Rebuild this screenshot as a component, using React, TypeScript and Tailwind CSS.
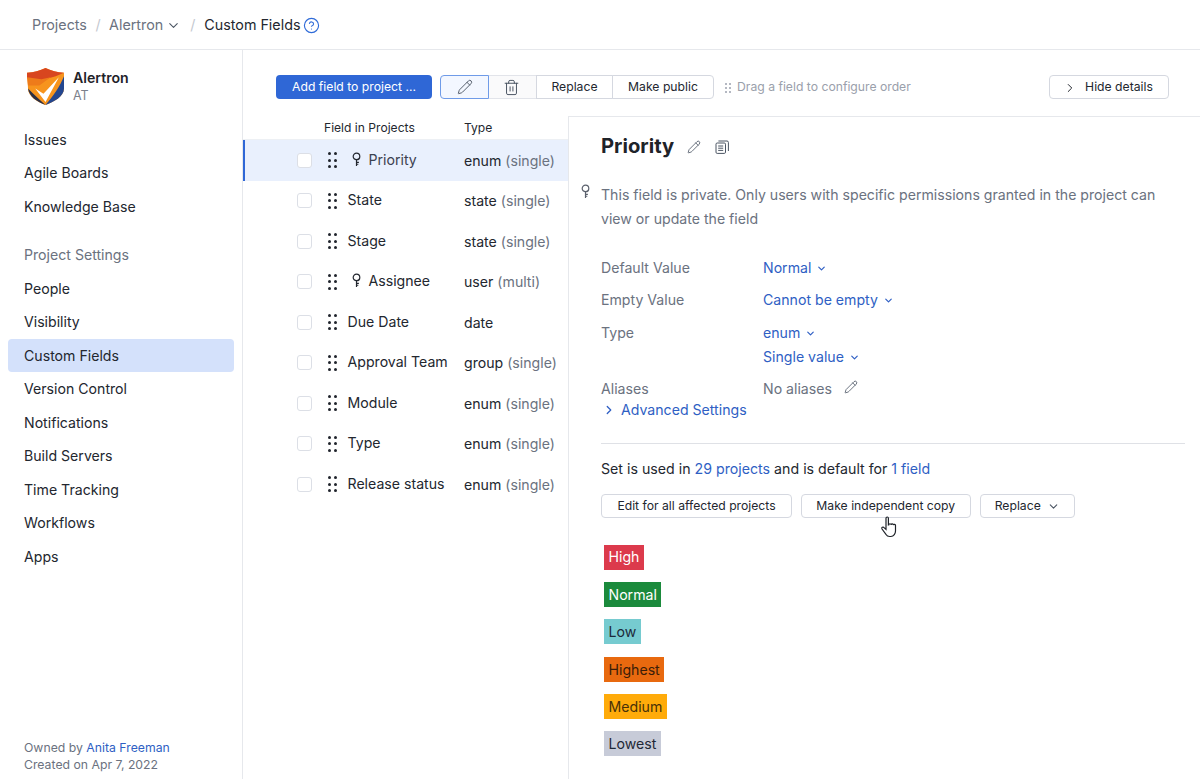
import { ChevronDown, ChevronRight, CircleHelp, Pencil, Trash2 } from "lucide-react";

const navTop = ["Issues", "Agile Boards", "Knowledge Base"];
const navSettings = ["People", "Visibility", "Custom Fields", "Version Control", "Notifications", "Build Servers", "Time Tracking", "Workflows", "Apps"];

const fields = [
  { name: "Priority", type: "enum", mode: "(single)", key: true, active: true },
  { name: "State", type: "state", mode: "(single)" },
  { name: "Stage", type: "state", mode: "(single)" },
  { name: "Assignee", type: "user", mode: "(multi)", key: true },
  { name: "Due Date", type: "date", mode: "" },
  { name: "Approval Team", type: "group", mode: "(single)" },
  { name: "Module", type: "enum", mode: "(single)" },
  { name: "Type", type: "enum", mode: "(single)" },
  { name: "Release status", type: "enum", mode: "(single)" },
];

const values = [
  { label: "High", cls: "bg-[#dc3a4c] text-white" },
  { label: "Normal", cls: "bg-[#1b8a3c] text-white" },
  { label: "Low", cls: "bg-[#76cbd0] text-[#1c2a3a]" },
  { label: "Highest", cls: "bg-[#e8690f] text-[#3b1d08]" },
  { label: "Medium", cls: "bg-[#ffab0a] text-[#4a3208]" },
  { label: "Lowest", cls: "bg-[#c7cbd8] text-[#1f2937]" },
];

function KeyIcon({ className }: { className?: string }) {
  return (
    <svg viewBox="0 0 12 16" className={className} fill="none" stroke="currentColor" strokeWidth="1.3">
      <circle cx="6" cy="4.6" r="3.6" />
      <path d="M6 8.2V15M6 11.2H8.6M6 13.2H8" />
    </svg>
  );
}

function CopyIcon({ className }: { className?: string }) {
  return (
    <svg viewBox="0 0 14 14" className={className} fill="none" stroke="currentColor" strokeWidth="1">
      <rect x="1" y="3" width="9.5" height="10.4" rx="1.2" />
      <path d="M3.4 1H12a1.4 1.4 0 0 1 1.4 1.4V11M3.2 6H8.2M3.2 8.2H8.2M3.2 10.4H8.2" />
    </svg>
  );
}

function Grip() {
  return (
    <span className="grid grid-cols-2 gap-x-[4px] gap-y-[3.5px] w-[9px] shrink-0">
      {[0, 1, 2, 3, 4, 5].map((i) => (
        <span key={i} className="w-[3px] h-[3px] rounded-full bg-[#20242c]" />
      ))}
    </span>
  );
}

function ShieldLogo() {
  return (
    <svg viewBox="0 0 36 36" className="w-[37px] h-[37px] shrink-0">
      <path d="M0 4.5Q10 4 18 0Q26 4 36 4.5V20C36 28 26 33 18 36C10 33 1 28 1 20Z" fill="#f7941d" />
      <path d="M0 4.5Q10 4 18 0Q26 4 36 4.5L28 8L14 12L0 10Z" fill="#d8461f" />
      <path d="M0 9L14 11L23 9L12 17L1 17Z" fill="#ee7b1a" />
      <path d="M36 8V20C36 28 26 33 18 36C25 28 32 18 36 8Z" fill="#23468f" />
      <path d="M1 20C7 26 12 31 18 36C10 33 2 28 1 20Z" fill="#2b2f45" />
      <path d="M8 20L16 25L31 9L18 33Z" fill="#ffffff" />
    </svg>
  );
}

function Btn({ children, className = "" }: { children: React.ReactNode; className?: string }) {
  return (
    <span className={`flex items-center justify-center h-[24px] pt-px border border-[#d5d8e0] text-[12.2px] text-[#23272f] bg-white ${className}`}>
      {children}
    </span>
  );
}

function Prop({ label, children, className = "" }: { label: string; children: React.ReactNode; className?: string }) {
  return (
    <div className={`flex items-center ${className}`}>
      <span className="w-[162px] text-[#6b7280]">{label}</span>
      {children}
    </div>
  );
}

function Link({ children }: { children: React.ReactNode }) {
  return (
    <span className="flex items-center gap-[5px] text-[#2f5fc4]">
      {children}
      <ChevronDown className="w-[11px] h-[11px]" strokeWidth={2.6} />
    </span>
  );
}

export default function App() {
  return (
    <div className="w-[1200px] h-[779px] overflow-hidden bg-white text-[14.13px] text-[#23272f] flex flex-col font-['Inter',sans-serif]">
      {/* Breadcrumbs */}
      <header className="h-[50px] shrink-0 border-b border-[#e6e8ec] flex items-center pl-[32px] pt-[1px] text-[14.3px]">
        <span className="text-[#6b7280]">Projects</span>
        <span className="text-[#c4c8d0] ml-[8.5px] mr-[8.5px]">/</span>
        <span className="text-[#6b7280]">Alertron</span>
        <ChevronDown className="w-[15px] h-[15px] ml-[3px] text-[#4b5563]" strokeWidth={1.7} />
        <span className="text-[#c4c8d0] ml-[9px] mr-[9px]">/</span>
        <span>Custom Fields</span>
        <CircleHelp className="w-[17px] h-[17px] ml-[3px] text-[#2f6bd8]" strokeWidth={1.6} />
      </header>

      <div className="flex flex-1 min-h-0">
        {/* Sidebar */}
        <aside className="w-[243px] shrink-0 border-r border-[#e6e8ec] flex flex-col">
          <div className="flex items-center gap-[9px] pl-[27px] pt-[18px]">
            <ShieldLogo />
            <div className="leading-[18px] pt-[1px]">
              <div className="font-semibold text-[#1f2329]">Alertron</div>
              <div className="text-[12.5px] text-[#7b818c]">AT</div>
            </div>
          </div>
          <nav className="mt-[17.5px] flex flex-col px-[8px]">
            {navTop.map((n) => (
              <div key={n} className="h-[33.5px] flex items-center pl-[16px]">{n}</div>
            ))}
            <div className="h-[33.5px] flex items-center pl-[16px] mt-[15px] text-[#6b7280]">Project Settings</div>
            {navSettings.map((n) => (
              <div key={n} className={`h-[33.5px] flex items-center pl-[16px] rounded-[4px] ${n === "Custom Fields" ? "bg-[#d4e1fb]" : ""}`}>{n}</div>
            ))}
          </nav>
          <div className="mt-auto pl-[24px] pb-[6px] text-[12.25px] leading-[17px] text-[#6b7280]">
            <div>Owned by <span className="text-[#2f5fc4]">Anita Freeman</span></div>
            <div>Created on Apr 7, 2022</div>
          </div>
        </aside>

        <main className="flex-1 min-w-0 flex flex-col">
          {/* Toolbar */}
          <div className="h-[66px] shrink-0 flex items-start pt-[25px] pl-[33px] pr-[31px]">
            <span className="flex items-center justify-center w-[156px] h-[24px] pt-px rounded-[4px] bg-[#2f67d6] text-white text-[12.2px]">Add field to project ...</span>
            <span className="flex items-center justify-center w-[49px] h-[24px] ml-[8px] rounded-l-[4px] border border-[#6f9be8] bg-[#f3f7ff]">
              <Pencil className="w-[16px] h-[16px] text-[#4b5563]" strokeWidth={1.4} />
            </span>
            <span className="flex items-center justify-center w-[47px] h-[24px] pr-[2px] border-y border-[#e2e4ea] bg-[#fafafb]">
              <Trash2 className="w-[17px] h-[17px] text-[#4b5563]" strokeWidth={1.4} />
            </span>
            <Btn className="w-[77px]">Replace</Btn>
            <Btn className="w-[102px] -ml-px rounded-r-[4px]">Make public</Btn>
            <span className="flex items-center h-[24px] pt-px ml-[11px] text-[12.2px] text-[#9aa0ab]">
              <span className="grid grid-cols-2 gap-[2px] w-[6px] mr-[6px]">
                {[0, 1, 2, 3, 4, 5].map((i) => (
                  <span key={i} className="w-[2px] h-[2px] bg-[#b4b8c2]" />
                ))}
              </span>
              Drag a field to configure order
            </span>
            <Btn className="w-[120px] ml-auto rounded-[4px] gap-[8px] pr-[2px]">
              <ChevronRight className="w-[14px] h-[14px]" strokeWidth={1.7} />
              Hide details
            </Btn>
          </div>

          <div className="flex flex-1 min-h-0">
            {/* Field list */}
            <section className="w-[325px] shrink-0 flex flex-col">
              <div className="h-[24px] shrink-0 flex items-end text-[12.1px] leading-[16px] pb-[3px] border-b border-[#edf0f4]">
                <span className="w-[221px] pl-[81px]">Field in Projects</span>
                <span>Type</span>
              </div>
              {fields.map((f) => (
                <div key={f.name} className={`h-[40.5px] shrink-0 flex items-center ${f.active ? "bg-[#e9f0fd] border-l-2 border-[#2f67d6] pl-[52px]" : "pl-[54px]"}`}>
                  <span className="w-[15px] h-[15px] rounded-[3px] border border-[#dcdfe6] bg-white shrink-0" />
                  <span className="ml-[15.5px]"><Grip /></span>
                  <span className={`flex items-center w-[127.5px] whitespace-nowrap pb-[2px] ${f.key ? "pl-[14px]" : "pl-[11px]"}`}>
                    {f.key && <KeyIcon className="w-[11px] h-[15px] mr-[7px] text-[#23272f]" />}
                    <span className={f.active ? "text-[#3c4250]" : ""}>{f.name}</span>
                  </span>
                  <span className="whitespace-nowrap">{f.type} <span className="text-[#6b7280]">{f.mode}</span></span>
                </div>
              ))}
            </section>

            {/* Details */}
            <section className="flex-1 min-w-0 border-l border-t border-[#e6e8ec] pl-[32px] pr-[15px] pt-[16px] relative">
              <div className="flex items-center h-[27px]">
                <h1 className="text-[20.2px] font-bold text-[#1f2329]">Priority</h1>
                <Pencil className="w-[14px] h-[14px] ml-[13px] text-[#4b5563]" strokeWidth={1.4} />
                <CopyIcon className="w-[14px] h-[14px] ml-[14px] text-[#4b5563]" />
              </div>
              <KeyIcon className="absolute left-[11px] top-[67px] w-[11px] h-[15px] text-[#5b616d]" />
              <p className="mt-[23px] leading-[24px] text-[#6b7280]">
                This field is private. Only users with specific permissions granted in the project can<br />view or update the field
              </p>
              <div className="mt-[25px] flex flex-col">
                <Prop label="Default Value" className="h-[24px] mb-[8px]"><Link>Normal</Link></Prop>
                <Prop label="Empty Value" className="h-[24px] mb-[9px]"><Link>Cannot be empty</Link></Prop>
                <Prop label="Type" className="h-[24px]"><Link>enum</Link></Prop>
                <Prop label="" className="h-[24px] mb-[8px]"><Link>Single value</Link></Prop>
                <Prop label="Aliases" className="h-[24px]">
                  <span className="text-[#6b7280]">No aliases</span>
                  <Pencil className="w-[14px] h-[14px] ml-[12px] -mt-[5px] text-[#4b5563]" strokeWidth={1.4} />
                </Prop>
                <div className="flex items-center h-[18px] text-[#2f5fc4]">
                  <ChevronRight className="w-[14px] h-[14px] ml-[1px] mr-[5px]" strokeWidth={2.2} />
                  Advanced Settings
                </div>
              </div>
              <div className="mt-[23.5px] border-t border-[#dfe1e6]" />
              <div className="mt-[15px] h-[20px] flex items-center whitespace-pre text-[14.2px]">
                Set is used in <span className="text-[#2f5fc4]">29 projects</span> and is default for <span className="text-[#2f5fc4]">1 field</span>
              </div>
              <div className="flex mt-[15px] gap-[8.5px] relative">
                <Btn className="w-[191px] rounded-[4px]">Edit for all affected projects</Btn>
                <Btn className="w-[170.5px] rounded-[4px] border-[#a9c4f2]">Make independent copy</Btn>
                <Btn className="w-[95.5px] rounded-[4px] gap-[6px]">
                  Replace
                  <ChevronDown className="w-[13px] h-[13px] text-[#4b5563]" />
                </Btn>
                <svg viewBox="0 0 18 22" className="absolute left-[279px] top-[22px] w-[18px] h-[22px]" fill="#fff" stroke="#1f2329" strokeWidth="1.2">
                  <path d="M6 2.2c0-1.6 2.4-1.6 2.4 0V9l.4-.1c0-1.5 2.2-1.5 2.3-.1.2-1.2 2.2-1.2 2.3.2.4-1 2.1-.8 2.1.6v5.4c0 2.6-1.7 5.5-4.6 5.5H9.6c-2 0-2.9-.9-3.8-2.3L2 13c-.9-1.4 1-2.6 2.1-1.4L6 13.4Z" />
                </svg>
              </div>
              <div className="mt-[27px] flex flex-col items-start gap-[12.4px] pl-[3px]">
                {values.map((v) => (
                  <span key={v.label} className={`h-[25px] px-[4.5px] flex items-center ${v.cls}`}>{v.label}</span>
                ))}
              </div>
            </section>
          </div>
        </main>
      </div>
    </div>
  );
}
